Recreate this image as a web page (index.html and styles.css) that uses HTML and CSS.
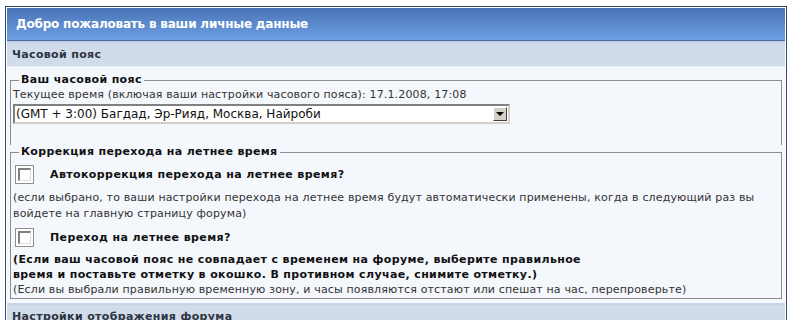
FILE: index.html
```html
<!DOCTYPE html>
<html lang="ru">
<head>
  <meta charset="UTF-8">
  <title>Личные данные</title>
  <link rel="stylesheet" href="styles.css">
</head>
<body>
  <div class="forumline">
    <div class="cat-head">Добро пожаловать в ваши личные данные</div>
    <div class="row-head">Часовой пояс</div>

    <div class="row-body">
      <fieldset class="group group-top">
        <legend>Ваш часовой пояс</legend>
        <div class="line">Текущее время (включая ваши настройки часового пояса): 17.1.2008, 17:08</div>
        <div class="select-box">
          <span class="select-text">(GMT + 3:00) Багдад, Эр-Рияд, Москва, Найроби</span>
          <span class="select-arrow"><span class="arrow-down"></span></span>
        </div>
      </fieldset>

      <fieldset class="group">
        <legend>Коррекция перехода на летнее время</legend>
        <div class="check-row">
          <span class="checkbox"><span class="checkbox-inner"></span></span>
          <span class="check-label">Автокоррекция перехода на летнее время?</span>
        </div>
        <div class="line note">(если выбрано, то ваши настройки перехода на летнее время будут автоматически применены, когда в следующий раз вы<br>войдете на главную страницу форума)</div>
        <div class="check-row">
          <span class="checkbox"><span class="checkbox-inner"></span></span>
          <span class="check-label">Переход на летнее время?</span>
        </div>
        <div class="line warn">(Если ваш часовой пояс не совпадает с временем на форуме, выберите правильное<br>время и поставьте отметку в окошко. В противном случае, снимите отметку.)</div>
        <div class="line">(Если вы выбрали правильную временную зону, и часы появляются отстают или спешат на час, перепроверьте)</div>
      </fieldset>
    </div>

    <div class="row-head">Настройки отображения форума</div>
  </div>
</body>
</html>
```

FILE: styles.css
```css
body {
  margin: 0;
  padding: 6px 0 0 5px;
  background: #fff;
  font-family: "DejaVu Sans", Verdana, sans-serif;
  font-size: 11px;
  letter-spacing: 0.15px;
  color: #333;
}

.forumline {
  width: 778px;
  border: 1px solid #34496b;
  padding: 1px;
  background: #fff;
}

/* синяя шапка */
.cat-head {
  height: 32px;
  line-height: 32px;
  padding-left: 9px;
  border-bottom: 1px solid #46679a;
  background: linear-gradient(#4a74b5, #6c9fe3);
  color: #fff;
  font-size: 12px;
  font-weight: bold;
  letter-spacing: -0.2px;
}

.row-head {
  height: 23px;
  line-height: 23px;
  padding-left: 5px;
  border-top: 2px solid #c6d4ea;
  border-bottom: 1px solid #e6ecf5;
  background: #d1dcea;
  color: #2e3440;
  font-weight: bold;
  letter-spacing: 0.35px;
}

.row-body {
  background: #f4f7fc;
  padding: 6px 3px 4px;
}

.group {
  margin: 0;
  padding: 0 2px;
  border: 1px solid #8c8c8c;
  min-width: 0;
}

.group legend {
  margin-left: 6px;
  padding: 0 2px;
  line-height: 14px;
  font-weight: bold;
  letter-spacing: 0.35px;
  color: #111;
}

/* у верхней группы нет нижней рамки, чтобы блоки сливались */
.group-top {
  border-bottom: none;
  padding-bottom: 21px;
}

.line {
  line-height: 16px;
}

.select-box {
  display: flex;
  align-items: center;
  width: 493px;
  height: 16px;
  margin-top: 1px;
  border: 2px solid;
  border-color: #808080 #d4d0c8 #d4d0c8 #808080;
  background: #fff;
}

.select-text {
  flex: 1;
  padding-left: 1px;
  font-size: 12px;
  letter-spacing: 0;
  color: #111;
}

.select-arrow {
  display: flex;
  justify-content: center;
  align-items: center;
  width: 12px;
  height: 12px;
  margin-right: 1px;
  border: 1px solid;
  border-color: #fff #404040 #404040 #fff;
  background: #d4d0c8;
}

.arrow-down {
  width: 0;
  height: 0;
  border-left: 4px solid transparent;
  border-right: 4px solid transparent;
  border-top: 4px solid #000;
}

.check-row {
  display: flex;
  align-items: center;
  height: 24px;
  margin-top: 3px;
}

.note {
  margin-top: 4px;
}

.checkbox {
  display: flex;
  justify-content: center;
  align-items: center;
  width: 17px;
  height: 17px;
  margin-left: 2px;
  border: 1px solid #8f8f8f;
  background: #fff;
}

.checkbox-inner {
  width: 10px;
  height: 10px;
  border: 1px solid;
  border-width: 2px 1px 1px 2px;
  border-color: #808080 #e0ddd6 #e0ddd6 #808080;
  background: #fff;
}

.check-label {
  margin-left: 16px;
  font-weight: bold;
  letter-spacing: 0.4px;
  color: #111;
}

.warn {
  margin-top: 3px;
  line-height: 15px;
  font-weight: bold;
  letter-spacing: 0.37px;
  color: #111;
}
```
